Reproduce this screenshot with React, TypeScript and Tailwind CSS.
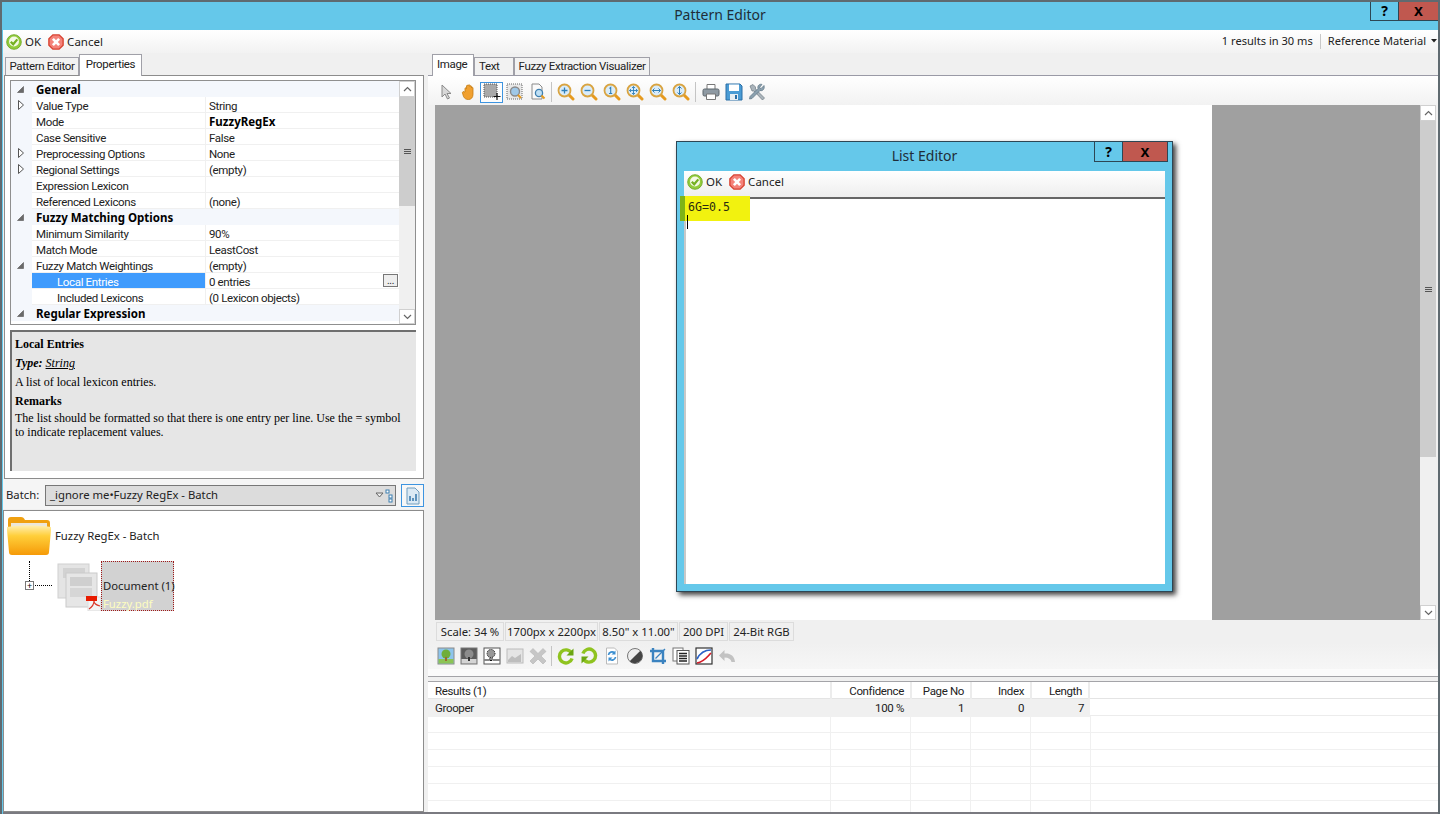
import type { ReactNode } from "react";

const sysFont = "font-['Noto_Sans',sans-serif]";
// the grid, tabs and results use a tighter face than the toolbars
const tight = "font-['Roboto',sans-serif] text-[11.5px] tracking-[-0.35px]";

function Svg({ size = 18, children }: { size?: number; children: ReactNode }) {
    return (
        <svg width={size} height={size} viewBox="0 0 18 18" className="shrink-0">
            {children}
        </svg>
    );
}

function OkIcon() {
    return (
        <Svg size={16}>
            <circle cx="9" cy="9" r="8.200" fill="#93cc3c" stroke="#6fa825" strokeWidth="1" />
            <circle cx="9" cy="8.500" r="5.600" fill="#f4f9e6" />
            <path d="M5.400 8.600l2.700 3 4.600-5.600" fill="none" stroke="#74b022" strokeWidth="2.500" />
        </Svg>
    );
}

function CancelIcon() {
    return (
        <Svg size={16}>
            <path d="M5.500 1h7L17 5.500v7L12.500 17h-7L1 12.500v-7z" fill="#f4837a" stroke="#d8402f" strokeWidth="1.500" />
            <path d="M5.500 5.500l7 7M12.500 5.500l-7 7" stroke="#fff" strokeWidth="3" />
        </Svg>
    );
}

function Magnifier({ children }: { children?: ReactNode }) {
    return (
        <Svg>
            <path d="M11.500 11.500l4.500 4.500" stroke="#e69a1e" strokeWidth="3" strokeLinecap="round" />
            <circle cx="7.500" cy="7.500" r="6" fill="#d9ecfa" stroke="#d9a441" strokeWidth="1.800" />
            {children}
        </Svg>
    );
}

const topIcons: ReactNode[] = [
    <Svg key="arrow"><path d="M5 2v12l3-3 2.500 5 2-1-2.500-4.500h4z" fill="#d8d8d8" stroke="#8a8a8a" /></Svg>,
    <Svg key="hand"><path d="M5 9V5.500c0-1 1.500-1 1.500 0V3c0-1 1.700-1 1.700 0v-.500c0-1 1.700-1 1.700 0V3.500c0-1 1.600-1 1.600 0V5c0-1 1.500-1 1.500 0v6.500c0 3-2 5-4.500 5s-4-1-5-3L2.500 10c-.5-1 1-2 2-1z" fill="#f0a030" stroke="#c57c12" strokeWidth=".8" /></Svg>,
    <Svg key="sel"><rect x="1" y="1" width="13" height="13" fill="#a9a9a9" stroke="#555" strokeDasharray="1 1" /><path d="M14 10v7M10.500 13.500h7" stroke="#111" strokeWidth="1.200" /></Svg>,
    <Svg key="zoomsel"><rect x="1" y="1" width="15" height="15" fill="#e8e8e8" stroke="#666" strokeDasharray="1 1" /><circle cx="9" cy="8.500" r="4.500" fill="#9fc8e8" stroke="#8a8a8a" strokeWidth="1.400" /><path d="M12 12l3 3" stroke="#e69a1e" strokeWidth="2" /></Svg>,
    <Svg key="zoompage"><path d="M3 1h7l3 3v12H3z" fill="#fafafa" stroke="#8a8a8a" /><circle cx="10" cy="10" r="3.600" fill="#bfe0f5" stroke="#3d7fb0" strokeWidth="1.300" /><path d="M12.500 12.500l3 3" stroke="#e69a1e" strokeWidth="2" /></Svg>,
    "sep",
    <Magnifier key="in"><path d="M4.500 7.500h6M7.500 4.500v6" stroke="#2f7fb8" strokeWidth="1.300" /></Magnifier>,
    <Magnifier key="out"><path d="M4.500 7.500h6" stroke="#2f7fb8" strokeWidth="1.300" /></Magnifier>,
    <Magnifier key="one"><path d="M6.500 5.500l1.200-1v6M6 10.500h3.200" stroke="#2f7fb8" strokeWidth="1.100" fill="none" /></Magnifier>,
    <Magnifier key="fit"><path d="M7.500 3.500v8M3.500 7.500h8M6 5l1.500-1.500L9 5M6 10l1.500 1.500L9 10M5 6L3.500 7.500 5 9M10 6l1.500 1.500L10 9" stroke="#2f7fb8" strokeWidth=".9" fill="none" /></Magnifier>,
    <Magnifier key="fitw"><path d="M3.500 7.500h8M5.500 5.500l-2 2 2 2M9.500 5.500l2 2-2 2" stroke="#2f7fb8" strokeWidth="1" fill="none" /></Magnifier>,
    <Magnifier key="fith"><path d="M7.500 3.500v8M5.500 5.500l2-2 2 2M5.500 9.500l2 2 2-2" stroke="#2f7fb8" strokeWidth="1" fill="none" /></Magnifier>,
    "sepwide",
    <Svg key="print"><path d="M5 1.500h8v5H5z" fill="#fff" stroke="#777" /><rect x="1" y="6" width="16" height="7" rx="1.500" fill="#8f9aa3" stroke="#5d666d" /><path d="M4.500 11h9v5.500h-9z" fill="#fff" stroke="#777" /></Svg>,
    <Svg key="save"><path d="M1 1h14l2 2v14H1z" fill="#4a9bd4" stroke="#2a6ea6" /><rect x="4" y="1.500" width="10" height="6.500" fill="#fff" /><rect x="5" y="11" width="8" height="6" fill="#e8eef2" /><rect x="10" y="12" width="2" height="4" fill="#2a6ea6" /></Svg>,
    <Svg key="tools"><path d="M2 3l3-1.500 2.500 2.500v2L15.500 14l1 1-2 2-1-1L6 8H4z" fill="#aab4bb" stroke="#6f7a82" strokeWidth=".7" /><path d="M16 2.500l-3 3-1.500-1L14 1.500c-2-1-5 1-4 4L2 13.500 1.500 16l2.500-.5 8-8c3 1 5-2 4-5z" fill="#8ba0ae" stroke="#5d7484" strokeWidth=".7" /></Svg>,
];

const bottomIcons: ReactNode[] = [
    <Svg key="color"><rect x="1" y="1" width="16" height="16" fill="#8cc4ec" stroke="#8a8a8a" /><rect x="1.500" y="12" width="15" height="4.500" fill="#8cc455" /><circle cx="9" cy="7" r="4.500" fill="#6fae3a" /><rect x="8" y="10" width="2" height="4" fill="#9a6a32" /></Svg>,
    <Svg key="gray"><rect x="1" y="1" width="16" height="16" fill="#5c5c5c" stroke="#777" /><rect x="1.500" y="12" width="15" height="4.500" fill="#d4d4d4" /><circle cx="9" cy="7" r="4.500" fill="#8c8c8c" /><rect x="8" y="10" width="2" height="4" fill="#333" /></Svg>,
    <Svg key="bw"><rect x="1" y="1" width="16" height="16" fill="#fff" stroke="#555" /><path d="M1.500 13h5M10 13h6.500" stroke="#111" /><circle cx="8" cy="6.500" r="4" fill="#999" stroke="#111" strokeDasharray="1 1" /><path d="M7 10.500v3h2v-3" fill="none" stroke="#111" /></Svg>,
    <Svg key="chart"><rect x="1" y="2" width="16" height="14" fill="#e4e4e4" stroke="#bcbcbc" /><path d="M2 13l4-4 3 2 6-4v8H2z" fill="#bdbdbd" /></Svg>,
    <Svg key="x"><path d="M4 1.500L9 6.500l5-5 3 3-5 4.500 5 5-3 3-5-5-5 5-3-3 5-5-5-4.500z" fill="#c6c6c6" stroke="#b4b4b4" strokeWidth=".6" /></Svg>,
    "sep",
    <Svg key="rotl"><path d="M14.500 6a6.500 6.500 0 1 0 .6 5.500" fill="none" stroke="#8fc31f" strokeWidth="3.400" /><path d="M16.500 1.500v7h-7z" fill="#6ba512" /></Svg>,
    <Svg key="rotr"><path d="M3.500 12a6.500 6.500 0 1 0-.6-5.500" fill="none" stroke="#8fc31f" strokeWidth="3.400" /><path d="M1.500 16.500v-7h7z" fill="#6ba512" /></Svg>,
    <Svg key="flip"><path d="M3.500 1h8l3 3v13h-11z" fill="#fff" stroke="#bbb" /><path d="M5.500 8a3.500 3.500 0 0 1 6-2M12.500 10a3.500 3.500 0 0 1-6 2" fill="none" stroke="#3b8ed0" strokeWidth="1.700" /><path d="M12.500 3.500v4h-4zM5.500 14.500v-4h4z" fill="#3b8ed0" /></Svg>,
    <Svg key="contrast"><circle cx="9" cy="9" r="7.500" fill="#eee" stroke="#777" /><path d="M14.300 3.700A7.500 7.500 0 0 1 3.700 14.300z" fill="#444" /></Svg>,
    <Svg key="crop"><path d="M4 1v13h13M1 4h13v13" fill="none" stroke="#3b83c0" strokeWidth="2.400" /><path d="M6.500 11.500L16 2" stroke="#3b83c0" strokeWidth="1.200" /></Svg>,
    <Svg key="pages"><rect x="1" y="1" width="10" height="13" fill="#fff" stroke="#777" /><rect x="5" y="3.500" width="12" height="13.500" fill="#fff" stroke="#555" /><path d="M7 6.500h8M7 9h8M7 11.500h8M7 14h8" stroke="#222" strokeWidth="1.300" /></Svg>,
    <Svg key="curve"><rect x="1" y="1" width="16" height="16" fill="#fff" stroke="#333" strokeWidth="1.200" /><path d="M2 12C5 6 9 3 16 3" fill="none" stroke="#2a62c8" strokeWidth="1.700" /><path d="M2 16C9 15 12 10 16 6" fill="none" stroke="#d41d2a" strokeWidth="1.700" /></Svg>,
    <Svg key="undo"><path d="M1 8.500L6.500 3v3.500c5.500-.5 10 2 10.500 8.500h-3.500c-.5-3-3-4.500-7-4.500V14z" fill="#c2c2c2" /></Svg>,
];

function IconRow({ icons, active }: { icons: ReactNode[]; active?: number }) {
    return (
        <div className="flex items-center">
            {icons.map((icon, i) => {
                if (icon === "sep" || icon === "sepwide") {
                    return <div key={i} className={icon === "sep" ? "mx-[2px] h-[20px] w-[1px] bg-[#c4c4c4]" : "mx-[3px] h-[20px] w-[1px] bg-[#c4c4c4]"} />;
                }
                return (
                    <div
                        key={i}
                        className={
                            i === active
                                ? "flex h-[21px] w-[23px] items-center justify-center border border-[#3d94e0] bg-[#fdfdfd]"
                                : "flex h-[21px] w-[23px] items-center justify-center"
                        }
                    >
                        {icon}
                    </div>
                );
            })}
        </div>
    );
}

const rows = [
    { cat: true, open: true, name: "General" },
    { closed: true, name: "Value Type", value: "String" },
    { name: "Mode", value: "FuzzyRegEx", boldValue: true },
    { name: "Case Sensitive", value: "False" },
    { closed: true, name: "Preprocessing Options", value: "None" },
    { closed: true, name: "Regional Settings", value: "(empty)" },
    { name: "Expression Lexicon", value: "" },
    { name: "Referenced Lexicons", value: "(none)" },
    { cat: true, open: true, name: "Fuzzy Matching Options" },
    { name: "Minimum Similarity", value: "90%" },
    { name: "Match Mode", value: "LeastCost" },
    { open: true, name: "Fuzzy Match Weightings", value: "(empty)" },
    { name: "Local Entries", value: "0 entries", indent: true, selected: true },
    { name: "Included Lexicons", value: "(0 Lexicon objects)", indent: true },
    { cat: true, open: true, name: "Regular Expression" },
];

function Expander({ open, closed }: { open?: boolean; closed?: boolean }) {
    if (open) {
        return (
            <svg width="7" height="7" viewBox="0 0 7 7">
                <path d="M6.500.5v6h-6z" fill="#6a6a6a" stroke="#555" strokeWidth=".6" />
            </svg>
        );
    }
    if (closed) {
        return (
            <svg width="6" height="10" viewBox="0 0 6 10">
                <path d="M.5.5l5 4.500-5 4.500z" fill="#fff" stroke="#555" />
            </svg>
        );
    }
    return null;
}

function PropertyGrid() {
    return (
        <div className="flex h-[245px] border border-[#8f8f8f] bg-white">
            <div className="w-[388px] overflow-hidden">
                {rows.map((row) => (
                    <div key={row.name} className={row.cat ? "flex h-[16px] items-center bg-[#f4f7fc]" : "flex h-[16px] items-center"}>
                        <div className="flex h-[16px] w-[21px] shrink-0 items-center justify-center bg-[#f4f7fc] pr-[2px]">
                            <Expander open={row.open} closed={row.closed} />
                        </div>
                        {row.cat ? (
                            <div className="pl-[4px] pt-[2px] text-[11.5px] font-bold leading-[14px] text-black">{row.name}</div>
                        ) : (
                            <>
                                <div
                                    className={`h-[16px] w-[173px] shrink-0 overflow-hidden border-b border-[#f0f0f0] leading-[18px] ${tight} ${
                                        row.indent ? "pl-[25px]" : "pl-[4px]"
                                    } ${row.selected ? "bg-[#3f9bfd] text-white" : "text-[#222]"}`}
                                >
                                    {row.name}
                                </div>
                                <div className={`relative h-[16px] flex-1 border-b border-l border-[#f0f0f0] pl-[3px] leading-[18px] text-[#222] ${tight}`}>
                                    <span className={row.boldValue ? "font-['Noto_Sans',sans-serif] font-bold tracking-normal text-black" : ""}>{row.value}</span>
                                    {row.selected && (
                                        <div className="absolute right-[1px] top-[1px] flex h-[13px] w-[15px] items-center justify-center border border-[#777] bg-[#eee] text-[10px] leading-[10px]">
                                            ...
                                        </div>
                                    )}
                                </div>
                            </>
                        )}
                    </div>
                ))}
            </div>
            <VScroll thumbClass="h-[109px]" />
        </div>
    );
}

function VScroll({ thumbClass }: { thumbClass: string }) {
    return (
        <div className="flex w-[16px] shrink-0 flex-col bg-[#f0f0f0]">
            <div className="flex h-[16px] items-center justify-center border border-[#d0d0d0] bg-white">
                <svg width="9" height="6" viewBox="0 0 9 6"><path d="M1 5l3.500-3.500L8 5" fill="none" stroke="#666" strokeWidth="1.200" /></svg>
            </div>
            <div className={`flex items-center justify-center bg-[#cdcdcd] ${thumbClass}`}>
                <div className="flex flex-col gap-[1px]">
                    <div className="h-[1px] w-[7px] bg-[#555]" />
                    <div className="h-[1px] w-[7px] bg-[#555]" />
                    <div className="h-[1px] w-[7px] bg-[#555]" />
                </div>
            </div>
            <div className="flex-1" />
            <div className="flex h-[15px] items-center justify-center border border-[#d0d0d0] bg-white">
                <svg width="9" height="6" viewBox="0 0 9 6"><path d="M1 1l3.500 3.500L8 1" fill="none" stroke="#666" strokeWidth="1.200" /></svg>
            </div>
        </div>
    );
}

function Description() {
    return (
        <div className="mt-[5px] h-[141px] border-l-2 border-t-2 border-[#6f6f6f] bg-[#e6e6e6] pl-[3px] pt-[5px] font-['Liberation_Serif',serif] text-[12px] leading-[14px] text-black">
            <div className="font-bold">Local Entries</div>
            <div className="mt-[5px]">
                <b><i>Type:</i></b> <i className="underline">String</i>
            </div>
            <div className="mt-[5px]">A list of local lexicon entries.</div>
            <div className="mt-[5px] font-bold">Remarks</div>
            <div className="mt-[3px]">
                The list should be formatted so that there is one entry per line. Use the = symbol
                <br />
                to indicate replacement values.
            </div>
        </div>
    );
}

function Tab({ label, active, className }: { label: string; active?: boolean; className: string }) {
    return (
        <div
            className={`flex shrink-0 items-center border border-b-0 border-[#a0a0a8] text-[#222] ${tight} ${
                active ? "z-10 mb-[-1px] h-[22px] bg-white pb-[1px]" : "h-[18px] bg-[#f2f2f2]"
            } ${className}`}
        >
            {label}
        </div>
    );
}

function FolderIcon() {
    return (
        <svg width="46" height="40" viewBox="0 0 46 40" className="shrink-0">
            <defs>
                <linearGradient id="folderFront" x1="0" y1="0" x2="0" y2="1">
                    <stop offset="0" stopColor="#ffeeb0" />
                    <stop offset="0.35" stopColor="#ffcf3a" />
                    <stop offset="1" stopColor="#f59a08" />
                </linearGradient>
            </defs>
            <path d="M2 4c0-2 1-3 3-3h10c2 0 3 1 4 3h22c2 0 3 1 3 3v6H2z" fill="#f0a010" />
            <rect x="5" y="7" width="36" height="6" fill="#ece7da" />
            <path d="M1 11c14-2 30-2 44 0v3l-2 22c0 2-1 3-3 3H6c-2 0-3-1-3-3L1 14z" fill="url(#folderFront)" />
        </svg>
    );
}

function DocIcon() {
    return (
        <svg width="44" height="48" viewBox="0 0 44 48" className="shrink-0">
            <rect x="1" y="1" width="31" height="34" fill="#e4e4e4" stroke="#d0d0d0" />
            <rect x="6" y="5" width="22" height="10" fill="#d2d2d2" />
            <rect x="9" y="10" width="31" height="34" fill="#e6e6e6" stroke="#cacaca" />
            <rect x="13" y="14" width="22" height="9" fill="#cfcfcf" />
            <rect x="13" y="25" width="22" height="9" fill="#d6d6d6" />
            <rect x="31" y="34" width="13" height="14" fill="#f4f4f4" stroke="#ddd" />
            <rect x="29" y="33" width="11" height="5" fill="#e81b00" />
            <path d="M32 46c3-2 5-5 5-8 0 3 2 4 6 5" fill="none" stroke="#d9382a" strokeWidth="1.200" />
        </svg>
    );
}

function BatchTree() {
    return (
        <div className="mt-[1px] flex-1 border border-[#8c8c8c] bg-white">
            <div className="ml-[2px] mt-[5px] flex h-[40px] items-center gap-[3px] text-[11.3px] text-[#222]">
                <FolderIcon />
                <span>Fuzzy RegEx - Batch</span>
            </div>
            <div className="mt-[5px] flex h-[50px]">
                <div className="ml-[21px] flex w-[28px] shrink-0 flex-col">
                    <div className="ml-[4px] h-[20px] w-[1px] border-l border-dotted border-black" />
                    <div className="flex items-center">
                        <div className="flex h-[9px] w-[9px] items-center justify-center border border-[#777] text-[9px] leading-[7px]">
                            +
                        </div>
                        <div className="ml-[1px] w-[17px] border-t border-dotted border-black" />
                    </div>
                </div>
                <div className="ml-[4px] mt-[2px]">
                    <DocIcon />
                </div>
                <div className="flex h-[50px] w-[73px] shrink-0 flex-col whitespace-nowrap border border-dotted border-[#a01818] bg-[#d2d2d2] pl-[1px] pt-[15px] text-[11.3px] leading-[18px]">
                    <span className="text-[#222]">Document (1)</span>
                    <span className="text-[#fdfdc0]">Fuzzy.pdf</span>
                </div>
            </div>
        </div>
    );
}

function LeftColumn() {
    return (
        <div className="flex h-full w-[421px] shrink-0 flex-col">
            <div className="flex h-[22px] items-end pl-[2px]">
                <Tab label="Pattern Editor" className="w-[74px] justify-center" />
                <Tab label="Properties" active className="w-[63px] justify-center" />
            </div>
            <div className="ml-[1px] h-[404px] border border-[#8c8c8c] bg-white pl-[5px] pr-[7px] pt-[4px]">
                <PropertyGrid />
                <Description />
            </div>
            <div className="flex h-[30px] items-center bg-[#f5f5f5] pl-[3px] pt-[3px] text-[11.3px] text-[#222]">
                <span className="w-[39px]">Batch:</span>
                <div className="flex h-[21px] w-[351px] items-center justify-between border border-[#777] bg-[#dcdcdc] pl-[4px] pr-[2px]">
                    <span>_ignore me•Fuzzy RegEx - Batch</span>
                    <svg width="18" height="14" viewBox="0 0 18 14">
                        <path d="M1 4h7L4.500 8z" fill="#eee" stroke="#666" />
                        <rect x="11" y="1" width="3" height="3" fill="#fff" stroke="#3d7fb0" />
                        <rect x="14" y="6" width="3" height="3" fill="#fff" stroke="#3d7fb0" />
                        <rect x="14" y="10" width="3" height="3" fill="#fff" stroke="#3d7fb0" />
                    </svg>
                </div>
                <div className="ml-[5px] flex h-[23px] w-[23px] items-center justify-center border border-[#3d94e0] bg-[#f7f7f7]">
                    <svg width="14" height="18" viewBox="0 0 14 18">
                        <path d="M1 1h8l4 4v12H1z" fill="#dbe9f4" stroke="#6f9dbf" />
                        <path d="M4 14V9M7 14V11M10 14V7" stroke="#2a6ea6" strokeWidth="1.400" />
                    </svg>
                </div>
            </div>
            <BatchTree />
        </div>
    );
}

function Dialog() {
    return (
        <div className="absolute left-[241px] top-[36px] flex h-[451px] w-[497px] flex-col border border-[#2d4654] bg-[#65c8ea] px-[7px] shadow-[3px_3px_5px_rgba(0,0,0,0.75)]">
            <div className="relative flex h-[29px] shrink-0 items-center justify-center pb-[2px] text-[14px] text-[#1f2d38]">
                List Editor
                <div className="absolute right-[-3px] top-0 flex">
                    <div className="flex h-[20px] w-[28px] items-center justify-center border-b border-l border-[#2d4654] text-[14px] font-bold leading-none text-black">?</div>
                    <div className="flex h-[20px] w-[46px] items-center justify-center border-b border-l border-r border-[#2d4654] bg-[#c0584f] font-['Liberation_Sans',sans-serif] text-[16px] font-bold leading-none text-black">x</div>
                </div>
            </div>
            <div className="flex h-[26px] shrink-0 items-center gap-[3px] bg-gradient-to-b from-white to-[#eeeeee] pb-[4px] pl-[3px] text-[11.5px] text-[#222]">
                <OkIcon />
                <span>OK</span>
                <span className="ml-[4px]"><CancelIcon /></span>
                <span>Cancel</span>
            </div>
            <div className="relative mb-[7px] flex-1 border-2 border-b-0 border-r-0 border-t-[#666] border-l-[#c8c8c8] bg-white">
                <div className="absolute left-[-6px] top-[-3px] h-[25px] w-[6px] bg-[#7fb317]" />
                <div className="absolute left-[-1px] top-[-3px] flex h-[25px] w-[65px] items-center bg-[#f2f20f] pb-[2px] pl-[3px] font-['DejaVu_Sans_Mono',monospace] text-[11.6px] leading-none text-[#2a2a10]">
                    6G=0.5
                </div>
                <div className="absolute left-[1px] top-[16px] h-[14px] w-[1px] bg-black" />
            </div>
        </div>
    );
}

function RightColumn() {
    const grid = "grid grid-cols-[402px_80px_60px_60px_60px_1fr]";
    const cols = [0, 1, 2, 3, 4, 5];
    return (
        <div className="flex h-full flex-1 flex-col">
            <div className="flex h-[22px] items-end pl-[4px]">
                <Tab label="Image" active className="w-[42px] pl-[4px]" />
                <Tab label="Text" className="w-[40px] pl-[4px]" />
                <Tab label="Fuzzy Extraction Visualizer" className="w-[136px] justify-center" />
            </div>
            <div className="flex h-[30px] items-center border-t border-[#9a9aa6] bg-gradient-to-b from-white to-[#f2f2f2] pl-[6px] pr-[2px] pt-[3px]">
                <IconRow icons={topIcons} active={2} />
            </div>
            <div className="relative ml-[7px] mr-[2px] flex h-[515px]">
                <div className="flex flex-1 bg-white">
                    <div className="w-[205px] bg-[#a0a0a0]" />
                    <div className="flex-1 bg-white" />
                    <div className="w-[208px] bg-[#a0a0a0]" />
                </div>
                <VScroll thumbClass="h-[336px]" />
                <Dialog />
            </div>
            <div className="mt-[2px] flex h-[19px] pl-[8px] text-[11.3px] text-[#222]">
                {[
                    ["Scale: 34 %", "w-[68px]"],
                    ["1700px x 2200px", "w-[93px]"],
                    ['8.50" x 11.00"', "w-[79px]"],
                    ["200 DPI", "w-[49px]"],
                    ["24-Bit RGB", "w-[65px]"],
                ].map(([label, width]) => (
                    <div key={label} className={`mr-[1px] flex items-center justify-center whitespace-nowrap border border-[#dcdcdc] pt-[1px] ${width}`}>
                        {label}
                    </div>
                ))}
            </div>
            <div className="mt-[2px] flex h-[26px] items-center bg-gradient-to-b from-[#f0f0f0] to-[#f6f6f6] pl-[6px]">
                <IconRow icons={bottomIcons} />
            </div>
            <div className="h-[7px] bg-[#fbfbfb]" />
            <div className="h-[6px] border-y border-[#a4a4a8]" />
            <div className={`flex-1 overflow-hidden bg-white text-[#222] ${tight}`}>
                <div className={`${grid} h-[17px] border-b border-[#e4e4e4]`}>
                    <div className="pl-[7px] leading-[18px]">Results (1)</div>
                    <div className="border-l-2 border-[#ececec] pr-[6px] text-right leading-[18px]">Confidence</div>
                    <div className="border-l-2 border-[#ececec] pr-[6px] text-right leading-[18px]">Page No</div>
                    <div className="border-l-2 border-[#ececec] pr-[6px] text-right leading-[18px]">Index</div>
                    <div className="border-l-2 border-r-2 border-[#ececec] pr-[6px] text-right leading-[18px]">Length</div>
                    <div />
                </div>
                <div className={`${grid} h-[17px] border-b border-[#ececec]`}>
                    <div className="bg-[#f0f0f0] pl-[7px] leading-[18px]">Grooper</div>
                    <div className="bg-[#f0f0f0] pr-[6px] text-right leading-[18px]">100 %</div>
                    <div className="bg-[#f0f0f0] pr-[6px] text-right leading-[18px]">1</div>
                    <div className="bg-[#f0f0f0] pr-[6px] text-right leading-[18px]">0</div>
                    <div className="bg-[#f0f0f0] pr-[6px] text-right leading-[18px]">7</div>
                    <div />
                </div>
                {[0, 1, 2, 3, 4, 5].map((r) => (
                    <div key={r} className={`${grid} h-[17px] border-b border-[#f0f0f0]`}>
                        {cols.map((c) => (
                            <div key={c} className={c > 0 ? "border-l border-[#f0f0f0]" : ""} />
                        ))}
                    </div>
                ))}
            </div>
        </div>
    );
}

export default function App() {
    return (
        <div className={`flex h-[814px] w-[1440px] flex-col overflow-hidden border-x-2 border-t-2 border-[#5f6a70] bg-[#65c8ea] ${sysFont}`}>
            <div className="relative flex h-[28px] shrink-0 items-center justify-center pb-[3px] text-[14px] text-[#1f2d38]">
                Pattern Editor
                <div className="absolute right-0 top-0 flex">
                    <div className="flex h-[19px] w-[28px] items-center justify-center border-b border-l border-[#2d4654] text-[14px] font-bold leading-none text-black">?</div>
                    <div className="flex h-[19px] w-[40px] items-center justify-center border-b border-l border-[#2d4654] bg-[#c0584f] font-['Liberation_Sans',sans-serif] text-[16px] font-bold leading-none text-black">x</div>
                </div>
            </div>
            <div className="ml-[1px] flex min-h-0 flex-1 flex-col border-b-2 border-[#7a7a80] bg-[#f0f0f0]">
                <div className="flex h-[23px] shrink-0 items-center justify-between bg-gradient-to-b from-white to-[#f2f2f2] pl-[3px] pr-[1px] text-[11.5px] text-[#222]">
                    <div className="flex items-center gap-[3px]">
                        <OkIcon />
                        <span>OK</span>
                        <span className="ml-[4px]"><CancelIcon /></span>
                        <span>Cancel</span>
                    </div>
                    <div className="flex items-center text-[11.1px]">
                        <span>1 results in 30 ms</span>
                        <div className="mx-[7px] h-[15px] w-[1px] bg-[#c8c8c8]" />
                        <span>Reference Material</span>
                        <svg width="6" height="4" viewBox="0 0 6 4" className="ml-[5px]"><path d="M0 0h6L3 3.500z" fill="#222" /></svg>
                    </div>
                </div>
                <div className="flex min-h-0 flex-1 gap-[4px]">
                    <LeftColumn />
                    <RightColumn />
                </div>
            </div>
        </div>
    );
}
